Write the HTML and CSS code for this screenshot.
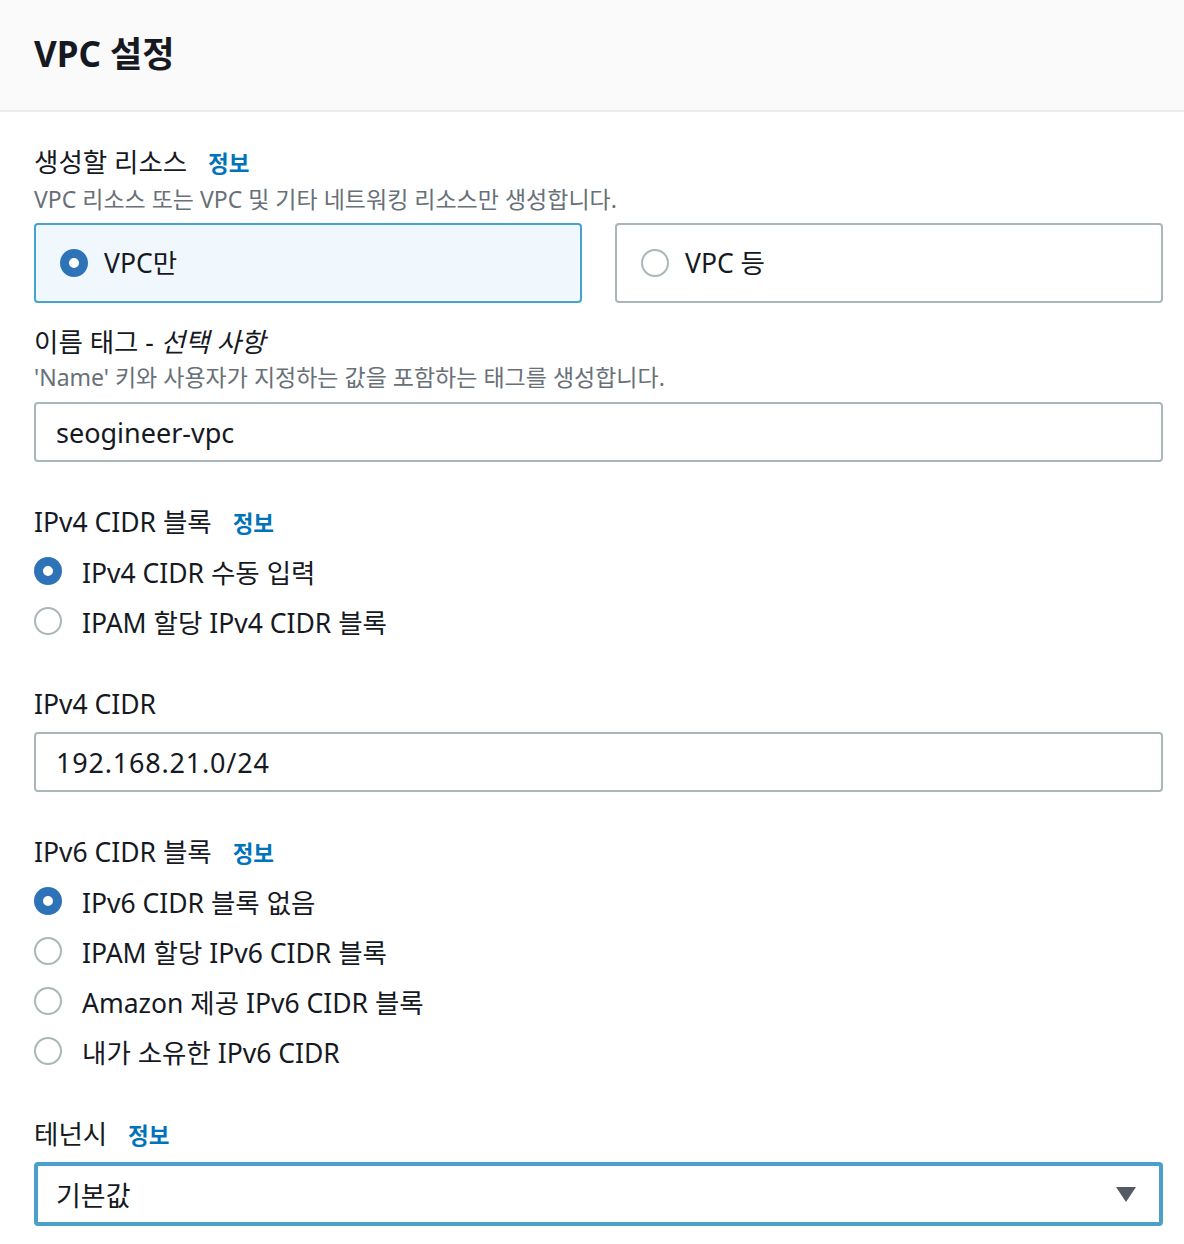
FILE: index.html
```html
<!doctype html>
<html lang="ko">
  <head>
    <meta charset="UTF-8" />
    <title>VPC 설정</title>
    <link rel="stylesheet" href="styles.css">
  </head>
  <body>
    <header class="panelHeader">
      <h1>VPC 설정</h1>
    </header>

    <div class="panelBody">
      <!-- 생성할 리소스 -->
      <div class="field">
        <div class="label">생성할 리소스 <a class="info" href="#">정보</a></div>
        <div class="desc">VPC 리소스 또는 VPC 및 기타 네트워킹 리소스만 생성합니다.</div>
        <div class="tiles">
          <div class="tile selected"><span class="radio on"></span>VPC만</div>
          <div class="tile"><span class="radio"></span>VPC 등</div>
        </div>
      </div>

      <div class="field tight">
        <div class="label">이름 태그 - <i>선택 사항</i></div>
        <div class="desc">'Name' 키와 사용자가 지정하는 값을 포함하는 태그를 생성합니다.</div>
        <div class="input">seogineer-vpc</div>
      </div>

      <div class="field">
        <div class="label">IPv4 CIDR 블록 <a class="info" href="#">정보</a></div>
        <div class="radioList">
          <div class="radioRow"><span class="radio on"></span>IPv4 CIDR 수동 입력</div>
          <div class="radioRow"><span class="radio"></span>IPAM 할당 IPv4 CIDR 블록</div>
        </div>
      </div>

      <div class="field">
        <div class="label">IPv4 CIDR</div>
        <div class="input digits">192.168.21.0/24</div>
      </div>

      <div class="field">
        <div class="label">IPv6 CIDR 블록 <a class="info" href="#">정보</a></div>
        <div class="radioList">
          <div class="radioRow"><span class="radio on"></span>IPv6 CIDR 블록 없음</div>
          <div class="radioRow"><span class="radio"></span>IPAM 할당 IPv6 CIDR 블록</div>
          <div class="radioRow"><span class="radio"></span>Amazon 제공 IPv6 CIDR 블록</div>
          <div class="radioRow"><span class="radio"></span>내가 소유한 IPv6 CIDR</div>
        </div>
      </div>

      <div class="field">
        <div class="label">테넌시 <a class="info" href="#">정보</a></div>
        <div class="select">
          <span>기본값</span>
          <span class="caret"></span>
        </div>
      </div>
    </div>
  </body>
</html>
```

FILE: styles.css
```css
/* Base */
* {
  box-sizing: border-box;
  margin: 0;
  padding: 0;
}
body {
  font-family: "Noto Sans", "Noto Sans CJK KR", sans-serif;
  background-color: #fff;
  color: #16191f;
}
.panelHeader {
  height: 112px;
  background-color: #fafafa;
  border-bottom: 2px solid #eaeded;
  padding: 0 34px 8px;
  display: flex;
  align-items: center;
}
.panelHeader h1 {
  font-size: 35px;
  font-weight: bold;
}
.panelBody {
  padding: 32px 21px 0 34px;
}
.field {
  margin-bottom: 42px;
}
.field.tight {
  margin-top: -21px;
}
.label {
  font-size: 26.5px;
  line-height: 36px;
}
.label i {
  font-style: italic;
}
.info {
  color: #0073bb;
  font-size: 22.5px;
  font-weight: bold;
  text-decoration: none;
  margin-left: 14px;
}
.desc {
  font-size: 23px;
  line-height: 34px;
  color: #687078;
}
/* Resource tiles */
.tiles {
  display: grid;
  grid-template-columns: 1fr 1fr;
  gap: 33px;
  margin-top: 7px;
}
.tile {
  height: 80px;
  border: 2px solid #aab7b8;
  border-radius: 4px;
  display: flex;
  align-items: center;
  padding: 0 0 3px 24px;
  font-size: 26.5px;
}
.tile.selected {
  border-color: #44a4cc;
  background-color: #f1f8fd;
}
.tile .radio {
  margin-right: 16px;
  margin-top: 3px;
}
/* Radio */
.radio {
  width: 28px;
  height: 28px;
  border-radius: 50%;
  border: 2px solid #aab7b8;
  display: inline-block;
  flex-shrink: 0;
}
.radio.on {
  border: 9px solid #2e73b8;
  background-color: #fff;
}
.radioList {
  margin-top: 4px;
  margin-bottom: -2px;
}
.radioRow {
  height: 50px;
  display: flex;
  align-items: center;
  font-size: 26.5px;
}
.radioRow .radio {
  margin-right: 20px;
}
/* Inputs */
.input,
.select {
  margin-top: 8px;
  height: 60px;
  border: 2px solid #aab7b8;
  border-radius: 4px;
  display: flex;
  align-items: center;
  padding: 0 20px;
  font-size: 27px;
}
.label + .input {
  margin-top: 10px;
}
.input.digits {
  letter-spacing: 0.8px;
}
.select {
  height: 64px;
  border: 4px solid #4aa0c8;
  justify-content: space-between;
  padding: 0 23px 0 18px;
}
.caret {
  width: 0;
  height: 0;
  border-left: 10px solid transparent;
  border-right: 10px solid transparent;
  border-top: 15px solid #545b64;
}
```
